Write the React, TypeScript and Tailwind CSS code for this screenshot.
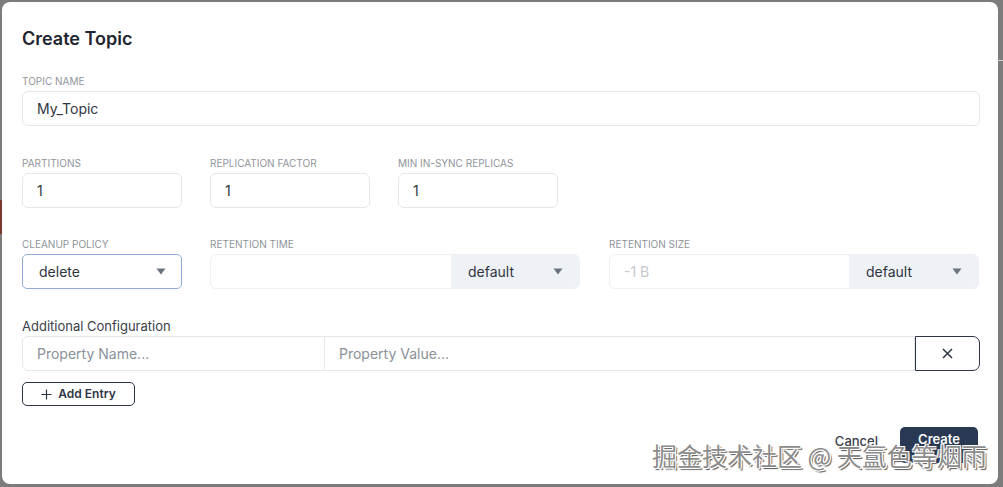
import React from "react";

const Tri = () => (
  <svg width="10" height="7" viewBox="0 0 10 7" className="shrink-0">
    <path d="M0.5 0.5 L9.5 0.5 L5 6.5 Z" fill="#6b7280" />
  </svg>
);

const Label = ({ children }: { children: React.ReactNode }) => (
  <div className="text-[10px] leading-[14px] uppercase text-[#8f949b] mb-[3px]">{children}</div>
);

export default function App() {
  return (
    <div className="w-[1003px] h-[487px] bg-[#7c7c7c] relative overflow-hidden" style={{ fontFamily: "Inter, 'Noto Sans', sans-serif" }}>
      <div className="absolute right-0 top-[60px] w-[5px] h-[420px] flex flex-col gap-[14px]">
        <div className="h-[1px] bg-[#d0d0d0]" />
      </div>
      <div className="absolute left-0 top-[200px] w-[2px] h-[34px] bg-[#7a3a2a]" />
      <div className="ml-[2px] mt-[2px] w-[996px] h-[482px] bg-white rounded-[8px] px-[20px] pt-[23px] relative">
        <div className="text-[18px] leading-[28px] font-semibold text-[#1f2530]">Create Topic</div>

        <div className="mt-[21px]">
          <Label>Topic Name</Label>
          <div className="w-[958px] h-[35px] border border-[#e3e6ea] rounded-[6px] flex items-center px-[14px] text-[14px] text-[#2f3540]">My_Topic</div>
        </div>

        <div className="mt-[30px] flex gap-[28px]">
          {["Partitions", "Replication Factor", "Min In-Sync Replicas"].map((l) => (
            <div key={l}>
              <Label>{l}</Label>
              <div className="w-[160px] h-[35px] border border-[#e3e6ea] rounded-[6px] flex items-center px-[14px] text-[14px] text-[#2f3540]">1</div>
            </div>
          ))}
        </div>

        <div className="mt-[29px] flex gap-[28px]">
          <div>
            <Label>Cleanup Policy</Label>
            <div className="w-[160px] h-[35px] border-[1.5px] border-[#93abdb] rounded-[5px] flex items-center justify-between pl-[16px] pr-[15px] text-[14px] text-[#2f3540]">
              <span>delete</span>
              <Tri />
            </div>
          </div>
          <div>
            <Label>Retention Time</Label>
            <div className="w-[370px] h-[35px] border border-[#eef0f3] rounded-[6px] flex overflow-hidden">
              <div className="w-[240px] h-full" />
              <div className="flex-1 h-full bg-[#eef1f5] flex items-center justify-between pl-[17px] pr-[16px] text-[14px] text-[#2f3540]">
                <span>default</span>
                <Tri />
              </div>
            </div>
          </div>
          <div className="ml-[1px]">
            <Label>Retention Size</Label>
            <div className="w-[370px] h-[35px] border border-[#eef0f3] rounded-[6px] flex overflow-hidden">
              <div className="w-[239px] h-full flex items-center px-[14px] text-[14px] text-[#c4c8cd]">-1 B</div>
              <div className="flex-1 h-full bg-[#eef1f5] flex items-center justify-between pl-[17px] pr-[16px] text-[14px] text-[#2f3540]">
                <span>default</span>
                <Tri />
              </div>
            </div>
          </div>
        </div>

        <div className="mt-[28px]">
          <div className="text-[13px] leading-[18px] text-[#3a404a] mb-[1px]">Additional Configuration</div>
          <div className="flex w-[958px] h-[35px]">
            <div className="w-[303px] h-full border border-[#e3e6ea] rounded-l-[6px] flex items-center px-[14px] text-[14px] text-[#8a9099]">Property Name...</div>
            <div className="w-[590px] h-full border-y border-r border-[#e3e6ea] flex items-center px-[14px] text-[14px] text-[#8a9099]">Property Value...</div>
            <div className="flex-1 h-full border border-[#2d3444] rounded-r-[7px] flex items-center justify-center">
              <svg width="11" height="11" viewBox="0 0 11 11">
                <path d="M1 1 L10 10 M10 1 L1 10" stroke="#2d3444" strokeWidth="1.5" />
              </svg>
            </div>
          </div>
          <div className="mt-[11px] w-[113px] h-[24px] border border-[#2d3444] rounded-[5px] flex items-center justify-center gap-[6px] text-[12px] font-semibold text-[#2d3444]">
            <svg width="11" height="11" viewBox="0 0 11 11">
              <path d="M5.5 0.5 V10.5 M0.5 5.5 H10.5" stroke="#2d3444" strokeWidth="1.2" />
            </svg>
            <span>Add Entry</span>
          </div>
        </div>

        <div className="mt-[21px] flex justify-end items-center gap-[22px]">
          <span className="text-[13px] font-medium text-[#3a404a] -mt-[6px]">Cancel</span>
          <div className="w-[78px] h-[36px] bg-[#2a3953] rounded-[5px] flex items-center justify-center text-[13px] font-semibold text-white pb-[10px]">Create</div>
        </div>

        <div
          className="absolute left-[650px] top-[438px] text-[25px] leading-[30px] text-[#8c8c8c] whitespace-nowrap"
          style={{
            fontFamily: "'Noto Sans CJK SC', sans-serif",
            textShadow: "1px 1px 0 #fff, -1px -1px 0 #fff, 1px -1px 0 #fff, -1px 1px 0 #fff, 2px 2px 1px #555",
          }}
        >
          掘金技术社区 @ 天氲色等烟雨
        </div>
      </div>
    </div>
  );
}
